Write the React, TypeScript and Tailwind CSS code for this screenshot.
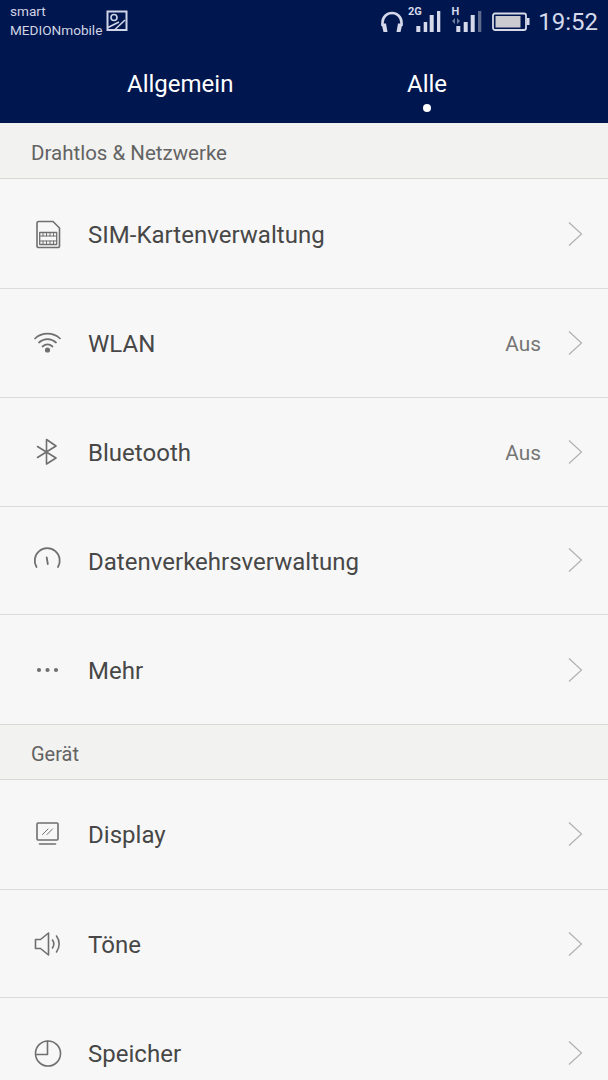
import React from "react";

const I = ({ children }: { children: React.ReactNode }) => (
  <svg width="32" height="32" viewBox="0 0 32 32" fill="none" stroke="#6f6f6f" strokeWidth="1.600" strokeLinecap="round" strokeLinejoin="round">
    {children}
  </svg>
);

const Sim = () => (
  <I>
    <path d="M7.500 3.500h14.500l6.500 6.500V28a1.500 1.500 0 0 1-1.500 1.500H7.500A1.500 1.500 0 0 1 6 28V5a1.500 1.500 0 0 1 1.500-1.500Z" />
    <rect x="8.700" y="14.500" width="17" height="12" strokeWidth="1.300" />
    <path d="M8.700 18h17M8.700 23h17M12 14.500V18M15.500 14.500V18M19 14.500V18M22.500 14.500V18M12 23v3.500M15.500 23v3.500M19 23v3.500M22.500 23v3.500" strokeWidth="1" />
  </I>
);
const Wifi = () => (
  <I>
    <path d="M4 11.500C11 5 22 5 29 11.500" strokeWidth="1.700" />
    <path d="M8 15.500C13 11 20 11 25 15.500" strokeWidth="1.700" />
    <path d="M11.500 19.500C14.500 17 18.500 17 21.500 19.500" strokeWidth="1.700" />
    <circle cx="16.500" cy="23" r="2.600" fill="#6f6f6f" stroke="none" />
  </I>
);
const Bt = () => (
  <I>
    <path d="M6.500 10.500 25 22 15.500 28V3.500L25 10 6.500 21.500" />
  </I>
);
const Gauge = () => (
  <I>
    <path d="M5.500 23A12.500 12.500 0 1 1 27 23" strokeWidth="1.800" />
    <path d="M15.700 13.500 16.800 20" strokeWidth="1.800" />
  </I>
);
const More = () => (
  <I>
    <circle cx="8" cy="16" r="2.100" fill="#6f6f6f" stroke="none" />
    <circle cx="16.500" cy="16" r="2.100" fill="#6f6f6f" stroke="none" />
    <circle cx="25" cy="16" r="2.100" fill="#6f6f6f" stroke="none" />
  </I>
);
const Disp = () => (
  <I>
    <rect x="6" y="5" width="21" height="17" rx="1" />
    <path d="M11.500 16.500 17 11M16 16.500 21.500 11" strokeWidth="1" />
    <path d="M8.500 26h16" />
  </I>
);
const Tone = () => (
  <I>
    <path d="M4.500 11.500h5l8-6.500v22l-8-6.500h-5Z" />
    <path d="M21.500 12c1.600 2.400 1.600 5.600 0 8" />
    <path d="M25.500 8c3.500 4.800 3.500 11.200 0 16" />
  </I>
);
const Store = () => (
  <I>
    <circle cx="17" cy="16.500" r="12.500" />
    <path d="M16.500 4.200V17.500H4.800" />
  </I>
);

const Chevron = () => (
  <svg width="16" height="26" viewBox="0 0 16 26" fill="none" stroke="#b0b0b0" strokeWidth="1.200" className="ml-[26px]">
    <path d="M2 1.500 14.500 13 2 24.500" />
  </svg>
);

const Row = ({ icon, label, value, last, h, pad = "pt-[2px]" }: { icon: React.ReactNode; label: string; value?: string; last?: boolean; h: string; pad?: string }) => (
  <div className={`${h} flex items-center pl-[31px] pr-[25px] ${last ? "" : "border-b border-[#dcdcda]"}`}>
    <div className="w-[32px] h-[32px] shrink-0">{icon}</div>
    <div className={`ml-[25px] flex-1 ${pad} text-[24px] text-[#474747] tracking-[0.020px]`}>{label}</div>
    {value && <div className="pt-[4px] text-[20.800px] text-[#757575]">{value}</div>}
    <Chevron />
  </div>
);

const Section = ({ label, h, size }: { label: string; h: string; size: string }) => (
  <div className={`${h} ${size} bg-[#f2f2f0] flex items-center pl-[31px] pt-[4px] text-[#636363] border-b border-[#d8d8d6]`}>{label}</div>
);

export default function App() {
  return (
    <div className="w-[608px] h-[1080px] overflow-hidden bg-[#f7f7f7] font-['Roboto',sans-serif]">
      <div className="h-[123px] bg-[#00164e] flex flex-col">
        <div className="h-[50px] flex items-start justify-between pl-[10px] pr-[10px]">
          <div className="flex items-start">
            <div className="text-[13.600px] leading-[19px] text-[#d0d4e4] pt-[1.500px]">
              <div>smart</div>
              <div>MEDIONmobile</div>
            </div>
            <svg width="22" height="22" viewBox="0 0 22 22" fill="none" stroke="#cfd4e8" strokeWidth="2" className="ml-[4px] mt-[10px]">
              <rect x="1.500" y="1.500" width="19" height="18.500" />
              <circle cx="8" cy="7.500" r="3" strokeWidth="1.600" />
              <path d="M2 17.500 13 12" strokeWidth="1.600" />
              <path d="M9 19.500 19 10" strokeWidth="1.600" />
            </svg>
          </div>
          <div className="flex items-start">
            <svg width="24" height="22" viewBox="0 0 24 22" fill="none" className="mt-[11px]">
              <path d="M2.500 15V11.500a9.500 9.500 0 0 1 19 0V15" stroke="#d5d9ea" strokeWidth="2.600" />
              <path d="M1.500 12.500h4.500l1.500 8.500H3.500ZM22.500 12.500H18l-1.500 8.500h4Z" fill="#d5d9ea" />
            </svg>
            <svg width="33" height="26" viewBox="0 0 33 26" className="ml-[4px] mt-[6px]" fill="#d5d9ea">
              <rect x="8.300" y="20" width="4" height="6" />
              <rect x="15.700" y="16" width="3.500" height="10" />
              <rect x="21.700" y="9" width="4" height="17" />
              <rect x="29" y="5" width="3.300" height="21" />
              <text x="0" y="9" fontSize="11" fontWeight="700" fontFamily="Roboto">2G</text>
            </svg>
            <svg width="31" height="26" viewBox="0 0 31 26" className="ml-[10px] mt-[6px]">
              <text x="0.500" y="9" fontSize="11" fontWeight="700" fontFamily="Roboto" fill="#d5d9ea">H</text>
              <path d="M4 12 1 15l3 3ZM6 12l3 3-3 3Z" fill="#6c7a9c" />
              <rect x="5.300" y="20" width="4" height="6" fill="#d5d9ea" />
              <rect x="12.700" y="16" width="4" height="10" fill="#d5d9ea" />
              <rect x="19.700" y="9" width="4" height="17" fill="#d5d9ea" />
              <rect x="27" y="5" width="3.300" height="21" fill="#5d6a8c" />
            </svg>
            <svg width="38" height="20" viewBox="0 0 38 20" className="ml-[10px] mt-[12px]">
              <rect x="1" y="1.500" width="33" height="16.500" rx="2" fill="none" stroke="#d5d9ea" strokeWidth="1.800" />
              <rect x="3.500" y="4" width="25" height="11.500" fill="#c9cbd0" />
              <rect x="35" y="6" width="2.500" height="7" fill="#d5d9ea" />
            </svg>
            <div className="text-[24px] leading-[28px] text-[#d5d9ea] ml-[8px] mt-[8px]">19:52</div>
          </div>
        </div>
        <div className="flex-1 relative flex text-[24px] text-white">
          <div className="w-[360px] pl-[127px] pt-[18px] leading-[32px]">Allgemein</div>
          <div className="pl-[47px] pt-[18px] leading-[32px]">Alle</div>
          <div className="absolute left-[423px] top-[54px] w-[8px] h-[8px] rounded-full bg-white" />
        </div>
      </div>
      <div className="h-[1px] bg-[#efefed]" />
      <Section h="h-[55px]" size="text-[20.500px]" label="Drahtlos & Netzwerke" />
      <Row h="h-[110px]" icon={<Sim />} label="SIM-Kartenverwaltung" />
      <Row h="h-[109px]" icon={<Wifi />} label="WLAN" value="Aus" />
      <Row h="h-[108.500px]" icon={<Bt />} label="Bluetooth" value="Aus" />
      <Row h="h-[108.800px]" icon={<Gauge />} label="Datenverkehrsverwaltung" pad="pt-[4px]" />
      <Row h="h-[108.700px]" icon={<More />} label="Mehr" pad="pt-[3px]" last />
      <div className="border-t border-[#d8d8d6]">
        <Section h="h-[55px]" size="text-[20px]" label="Gerät" />
      </div>
      <Row h="h-[110px]" icon={<Disp />} label="Display" />
      <Row h="h-[108.500px]" icon={<Tone />} label="Töne" />
      <Row h="h-[109px]" icon={<Store />} label="Speicher" last />
    </div>
  );
}
